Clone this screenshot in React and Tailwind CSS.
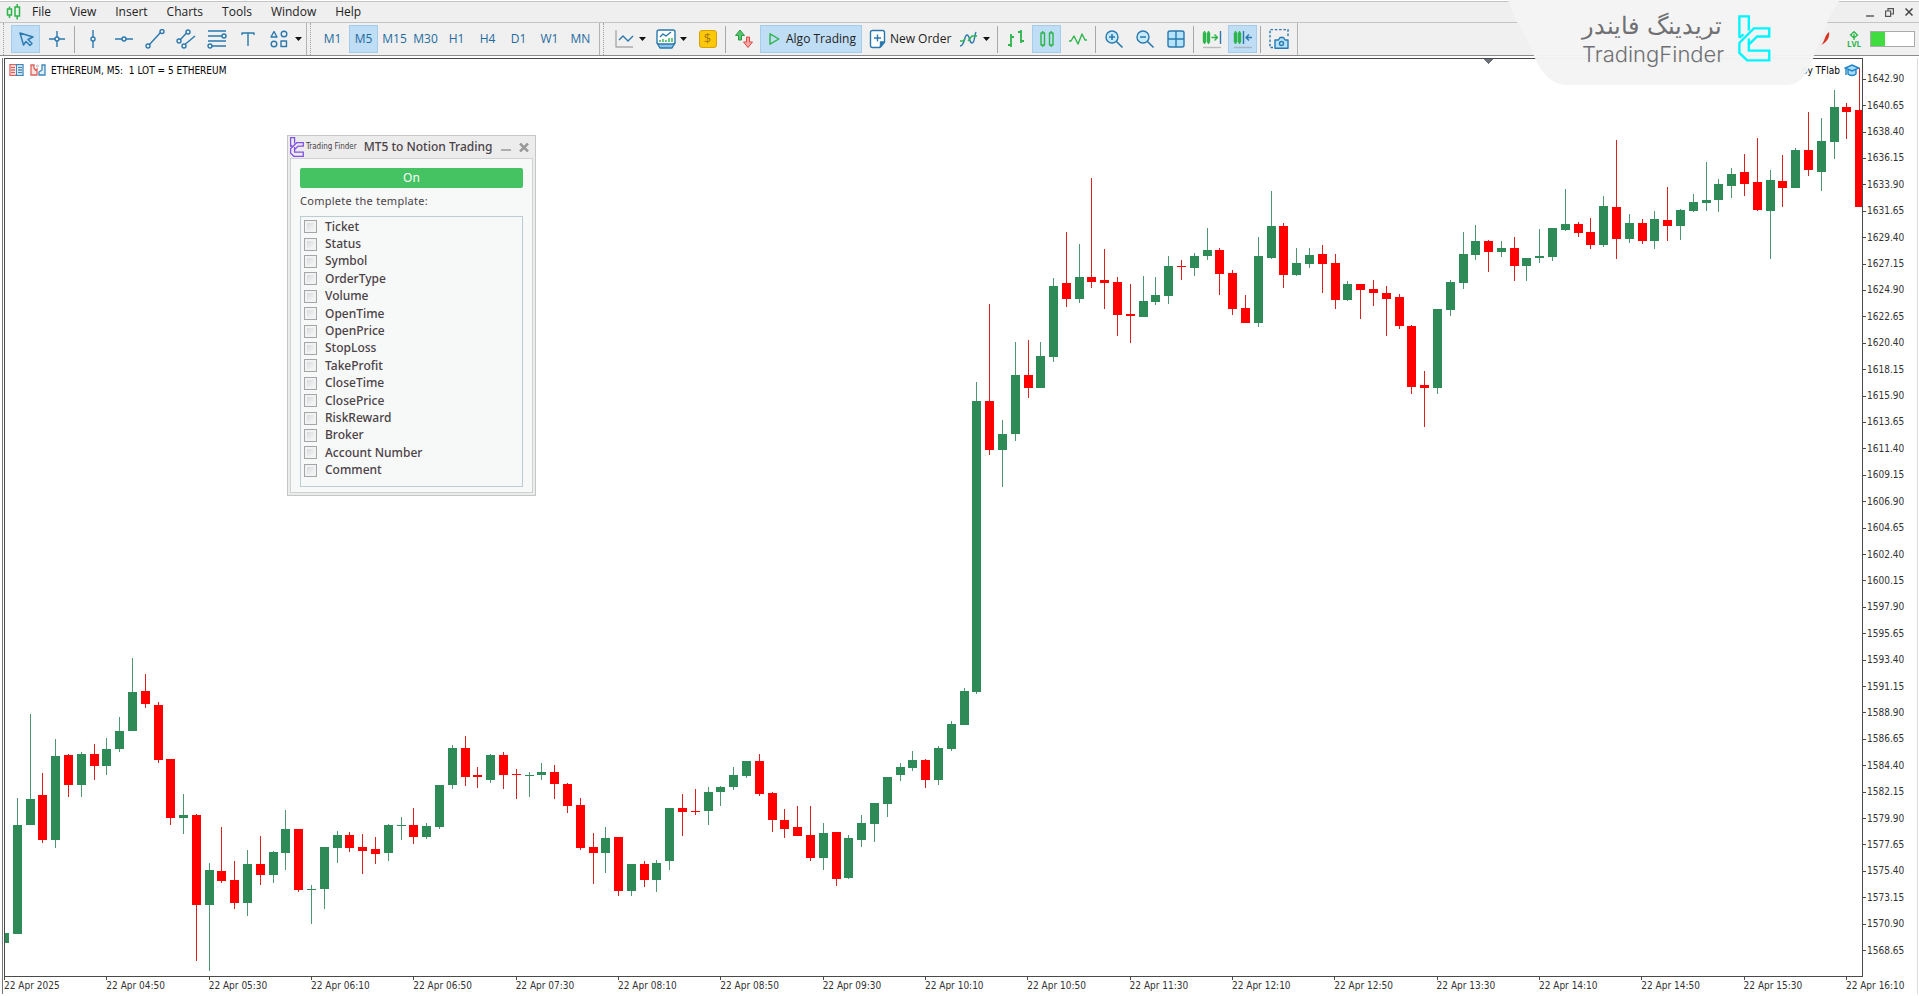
const BLUE = '#2a78ad';
const GREEN = '#2bb54a';

const menus = ['File', 'View', 'Insert', 'Charts', 'Tools', 'Window', 'Help'];

const timeframes = ['M1', 'M5', 'M15', 'M30', 'H1', 'H4', 'D1', 'W1', 'MN'];

const fields = [
  'Ticket',
  'Status',
  'Symbol',
  'OrderType',
  'Volume',
  'OpenTime',
  'OpenPrice',
  'StopLoss',
  'TakeProfit',
  'CloseTime',
  'ClosePrice',
  'RiskReward',
  'Broker',
  'Account Number',
  'Comment',
];

const prices = Array.from({ length: 34 }, (_, i) => (1642.9 - i * 2.25).toFixed(2));

const times = [
  '22 Apr 2025',
  '22 Apr 04:50',
  '22 Apr 05:30',
  '22 Apr 06:10',
  '22 Apr 06:50',
  '22 Apr 07:30',
  '22 Apr 08:10',
  '22 Apr 08:50',
  '22 Apr 09:30',
  '22 Apr 10:10',
  '22 Apr 10:50',
  '22 Apr 11:30',
  '22 Apr 12:10',
  '22 Apr 12:50',
  '22 Apr 13:30',
  '22 Apr 14:10',
  '22 Apr 14:50',
  '22 Apr 15:30',
  '22 Apr 16:10',
];

// [bullish, high, body top, body bottom, low] in plot units
const candles = [
  [1, 932, 932, 942, 942], [1, 797, 824, 933, 933], [1, 713, 798, 824, 824], [0, 772, 794, 839, 842],
  [1, 738, 755, 839, 847], [0, 753, 754, 784, 796], [1, 751, 753, 784, 796], [0, 743, 753, 765, 779],
  [1, 737, 748, 765, 774], [1, 716, 730, 748, 751], [1, 657, 691, 730, 730], [0, 673, 690, 703, 707],
  [0, 701, 704, 759, 762], [0, 758, 758, 817, 824], [1, 793, 814, 817, 833], [0, 813, 814, 904, 960],
  [1, 862, 869, 904, 970], [0, 826, 870, 880, 882], [0, 860, 879, 902, 908], [1, 849, 863, 902, 915],
  [0, 835, 863, 874, 884], [1, 850, 851, 874, 882], [1, 809, 828, 852, 869], [0, 828, 828, 889, 891],
  [1, 884, 888, 889, 923], [1, 846, 846, 888, 908], [1, 830, 834, 847, 862], [0, 831, 834, 847, 851],
  [0, 833, 846, 850, 873], [0, 836, 848, 853, 863], [1, 823, 824, 852, 860], [1, 816, 824, 825, 839],
  [0, 807, 824, 836, 843], [1, 822, 825, 836, 838], [1, 784, 784, 826, 828], [1, 744, 747, 784, 788],
  [0, 735, 747, 776, 785], [0, 766, 774, 776, 787], [1, 753, 754, 779, 782], [0, 751, 754, 774, 788],
  [0, 768, 773, 774, 798], [1, 771, 774, 775, 796], [1, 762, 771, 774, 779], [0, 764, 771, 783, 798],
  [0, 782, 783, 805, 812], [0, 797, 804, 847, 849], [0, 832, 846, 852, 883], [1, 826, 837, 852, 872],
  [0, 836, 836, 890, 895], [1, 863, 863, 890, 895], [0, 860, 863, 879, 886], [1, 859, 862, 879, 891],
  [1, 807, 807, 860, 869], [0, 793, 807, 811, 835], [0, 788, 810, 811, 814], [1, 786, 791, 810, 824],
  [1, 785, 786, 791, 805], [1, 766, 774, 786, 789], [1, 760, 760, 775, 777], [0, 753, 760, 793, 795],
  [0, 791, 792, 819, 831], [0, 808, 819, 828, 837], [0, 805, 826, 835, 835], [0, 805, 834, 857, 860],
  [1, 822, 832, 857, 869], [0, 831, 831, 878, 885], [1, 834, 837, 877, 878], [1, 814, 822, 839, 846],
  [1, 802, 802, 823, 841], [1, 776, 776, 803, 816], [1, 762, 766, 774, 780], [1, 750, 759, 767, 770],
  [0, 758, 759, 779, 787], [1, 745, 747, 779, 784], [1, 720, 723, 748, 750], [1, 687, 690, 724, 724],
  [1, 382, 401, 691, 693], [0, 304, 401, 450, 455], [1, 420, 434, 450, 487], [1, 342, 375, 434, 441],
  [0, 340, 375, 388, 398], [1, 342, 356, 388, 388], [1, 278, 286, 357, 362], [0, 232, 283, 299, 307],
  [1, 244, 277, 299, 303], [0, 178, 277, 282, 288], [0, 249, 280, 283, 309], [0, 277, 282, 315, 336],
  [0, 284, 314, 316, 343], [1, 276, 301, 317, 317], [1, 277, 295, 302, 305], [1, 256, 266, 296, 304],
  [0, 260, 266, 267, 280], [1, 253, 256, 268, 276], [1, 228, 250, 256, 260], [0, 248, 250, 274, 295],
  [0, 270, 273, 309, 315], [0, 295, 308, 323, 323], [1, 237, 256, 323, 327], [1, 191, 226, 258, 259],
  [0, 223, 226, 275, 288], [1, 248, 263, 275, 276], [1, 248, 255, 264, 268], [0, 245, 254, 264, 293],
  [0, 254, 263, 300, 309], [1, 281, 284, 300, 301], [0, 284, 284, 290, 319], [0, 280, 289, 293, 306],
  [0, 286, 293, 299, 336], [0, 294, 297, 326, 329], [0, 325, 326, 387, 394], [0, 371, 385, 388, 427],
  [1, 309, 309, 388, 394], [1, 280, 282, 310, 316], [1, 232, 254, 283, 289], [1, 225, 241, 255, 260],
  [0, 240, 241, 252, 272], [1, 241, 248, 252, 257], [0, 237, 248, 266, 281], [1, 258, 258, 266, 281],
  [1, 229, 256, 258, 263], [1, 228, 228, 257, 261], [1, 189, 224, 230, 231], [0, 222, 224, 233, 237],
  [0, 218, 232, 245, 249], [1, 196, 206, 245, 247], [0, 140, 207, 239, 259], [1, 214, 223, 239, 243],
  [0, 219, 223, 241, 244], [1, 211, 219, 241, 249], [0, 187, 220, 226, 241], [1, 209, 210, 226, 240],
  [1, 194, 202, 211, 212], [1, 162, 200, 203, 211], [1, 179, 184, 200, 212], [1, 168, 174, 186, 198],
  [0, 154, 172, 184, 196], [0, 138, 182, 210, 211], [1, 170, 180, 211, 259], [0, 155, 181, 188, 207],
  [1, 148, 150, 188, 188], [0, 112, 150, 170, 176], [1, 118, 141, 172, 191], [1, 90, 107, 142, 159],
  [0, 103, 107, 112, 139], [0, 68, 110, 207, 207],
];

const Icon = ({ children, color = BLUE, size = 20 }) => (
  <svg
    width={size}
    height={size}
    viewBox="0 0 20 20"
    fill="none"
    stroke={color}
    strokeWidth="1.4"
    strokeLinejoin="round"
    className="shrink-0"
    aria-hidden="true"
  >
    {children}
  </svg>
);

const Caret = () => (
  <svg width="7" height="4" viewBox="0 0 7 4" className="shrink-0" aria-hidden="true">
    <path d="M0 0h7L3.5 4z" fill="#111" />
  </svg>
);

const Tool = ({ label, active, children }) => (
  <button
    type="button"
    aria-label={label}
    className={`flex h-7 w-[29px] shrink-0 items-center justify-center border ${
      active ? 'border-[#a5cdea] bg-[#bfddf4]' : 'border-transparent'
    }`}
  >
    {children}
  </button>
);

const DropTool = ({ label, children }) => (
  <button type="button" aria-label={label} className="flex h-7 shrink-0 items-center gap-1 px-1">
    {children}
    <Caret />
  </button>
);

const Separator = () => <span className="mx-px h-[27px] w-px shrink-0 bg-[#a8a8a8]" />;

const Group = ({ children }) => (
  <div className="flex h-full shrink-0 items-center gap-0.5 border-r border-[#b4b4b4] pr-1">
    <span className="mr-[5px] ml-[3px] h-full border-l border-dotted border-[#a0a0a0]" />
    {children}
  </div>
);

const BrandMark = ({ className, color, strokeWidth = 6 }) => (
  <svg
    viewBox="537 46 98 140"
    className={className}
    fill="none"
    stroke={color}
    strokeWidth={strokeWidth}
    aria-hidden="true"
  >
    <path d="M541 114V50h28v42" />
    <path d="M541 114l12-10" />
    <path d="M584 86h46v24h-36l-25 24v18h61v29h-66l-23-22v-30z" />
    <path d="M569 116v18" />
  </svg>
);

const MenuBar = () => (
  <header className="flex h-[22px] items-center border-y border-[#c4c4c4] bg-[#efefef] pr-[6px] pl-[6px] text-[12px]">
    <svg width="15" height="16" viewBox="0 0 15 16" fill="none" stroke={GREEN} strokeWidth="1.5" aria-hidden="true">
      <path d="M1.500 5h4v6h-4zM3.500 2.500V5M3.500 11v3M9 3h4.500v9H9zM11.200 0v3M11.200 12v3.500" />
    </svg>
    <nav className="flex items-center gap-[19px] pl-[11px]">
      {menus.map((item) => (
        <a key={item} href="#" className="text-[#222]">
          {item}
        </a>
      ))}
    </nav>
    <div className="ml-auto flex items-center gap-[11px]">
      <button type="button" aria-label="Minimize">
        <svg width="8" height="9" viewBox="0 0 8 9" stroke="#555" strokeWidth="1.4">
          <path d="M0 8h8" />
        </svg>
      </button>
      <button type="button" aria-label="Restore">
        <svg width="9" height="9" viewBox="0 0 9 9" fill="none" stroke="#555" strokeWidth="1.2">
          <path d="M.6 3h5v5.400h-5zM3 3V.6h5.400V6H5.600" />
        </svg>
      </button>
      <button type="button" aria-label="Close">
        <svg width="8" height="8" viewBox="0 0 8 8" stroke="#444" strokeWidth="1.5">
          <path d="M.5.5l7 7M7.500.5l-7 7" />
        </svg>
      </button>
    </div>
  </header>
);

const Toolbar = () => (
  <div className="flex h-[33px] items-center border-b border-[#8c8c8c] bg-[#f0f0f0] text-[12px]">
    <Group>
      <Tool label="Cursor" active>
        <Icon>
          <path d="M4 4l13 4-5 2.500 4 4-2 2-4-4L7.500 16z" />
        </Icon>
      </Tool>
      <Tool label="Crosshair">
        <Icon>
          <path d="M10 2v6M10 12v6M2 10h6M12 10h6" />
          <circle cx="10" cy="10" r="2" />
        </Icon>
      </Tool>
      <Separator />
      <Tool label="Vertical line">
        <Icon>
          <path d="M10 1v7M10 12v7" />
          <circle cx="10" cy="10" r="2" />
        </Icon>
      </Tool>
      <Tool label="Horizontal line">
        <Icon>
          <path d="M1 10h7M12 10h7" />
          <circle cx="10" cy="10" r="2" />
        </Icon>
      </Tool>
      <Tool label="Trend line">
        <Icon>
          <path d="M4.500 15.500l11-12" />
          <circle cx="3" cy="17" r="2" />
          <circle cx="17" cy="2.500" r="2" />
        </Icon>
      </Tool>
      <Tool label="Channel">
        <Icon>
          <path d="M4.500 10.500l6-6.500M9.500 15L19 7" />
          <circle cx="3" cy="12" r="2" />
          <circle cx="12" cy="3" r="2" />
          <circle cx="8" cy="17" r="2" />
        </Icon>
      </Tool>
      <Tool label="Fibonacci">
        <Icon>
          <path d="M1 2h18M1 7h14M1 12h18M5 17h14" />
          <circle cx="17" cy="7" r="2" />
          <circle cx="3" cy="17" r="2" />
        </Icon>
      </Tool>
      <Tool label="Text">
        <Icon>
          <path d="M4 6V4h12v2M10 4v13" />
        </Icon>
      </Tool>
      <Tool label="Shapes">
        <Icon>
          <path d="M5 2.500L8 8H2zM12 12h5.500v5.500H12z" />
          <circle cx="15" cy="5" r="2.800" />
          <circle cx="5" cy="15" r="2.800" />
        </Icon>
      </Tool>
      <button type="button" aria-label="More shapes">
        <Caret />
      </button>
    </Group>

    <Group>
      {timeframes.map((tf) => (
        <button
          key={tf}
          type="button"
          className={`h-7 w-[29px] shrink-0 border text-center text-[#1f6b9f] ${
            tf === 'M5' ? 'border-[#a5cdea] bg-[#bfddf4]' : 'border-transparent'
          }`}
        >
          <span className="-mx-1">{tf}</span>
        </button>
      ))}
    </Group>

    <Group>
      <DropTool label="Chart type">
        <Icon>
          <path d="M1 1v17h17" stroke="#aaa" />
          <path d="M4 11l4-4 5 5 5-5" />
        </Icon>
      </DropTool>
      <DropTool label="Indicators">
        <Icon>
          <path d="M1 14l3 5h12l3-5z" fill="#8cc4e8" />
          <rect x="1" y="1" width="18" height="14" rx="2" fill="#fff" />
          <path d="M4 8l3-3 3 2 5-4" />
          <path d="M4 13v-2M7 13v-3M10 13v-2M13 13v-4M16 13v-4" stroke={GREEN} />
        </Icon>
      </DropTool>
      <Tool label="Symbols">
        <span className="flex h-[18px] w-[18px] items-center justify-center rounded-[3px] border border-[#d9a200] bg-[#fbc80b] text-[13px] text-[#a87900]">
          $
        </span>
      </Tool>
      <Separator />
      <Tool label="Depth of market">
        <Icon>
          <path d="M6 1L1.500 6.500h3V11h3V6.500h3z" stroke="#2b9a45" fill="#55c46c" strokeWidth="1" />
          <path d="M14 18.500L18.500 13h-3V8h-3v5h-3z" stroke="#d94a44" fill="#f3a6a2" strokeWidth="1" />
        </Icon>
      </Tool>
      <button
        type="button"
        className="flex h-7 shrink-0 items-center gap-1 border border-[#a5cdea] bg-[#bfddf4] px-[5px] text-[#222]"
      >
        <Icon color={GREEN} size={16}>
          <path d="M5 3.500v13L16 10z" strokeWidth="1.8" />
        </Icon>
        Algo Trading
      </button>
      <button type="button" className="flex h-7 shrink-0 items-center gap-0.5 pr-0.5 pl-1 text-[#222]">
        <Icon>
          <path d="M4.500 1.500h10a2 2 0 012 2V13l-5 5.500h-7a2 2 0 01-2-2v-13a2 2 0 012-2z" fill="#fff" />
          <path d="M16.500 13h-4v5z" fill={BLUE} />
          <path d="M9.500 5.500v7M6 9h7" />
        </Icon>
        New Order
      </button>
      <DropTool label="Objects">
        <Icon>
          <path d="M1 17C6 17 5 6 8 6s2 8 5 8 2-7 4-11" />
          <path d="M1 12h3l2-2M9 12l4-5h5" stroke={GREEN} />
        </Icon>
      </DropTool>
      <Separator />
      <Tool label="Bar chart">
        <Icon color={GREEN}>
          <path d="M5 5v13M5 8h3M2 16h3M15 1v13M12 3h3M15 12h3" strokeWidth="1.800" />
        </Icon>
      </Tool>
      <Tool label="Candlesticks" active>
        <Icon color={GREEN}>
          <path d="M4 4h3.500v12H4zM5.700 2v2M5.700 16v2M12.500 4H16v12h-3.500zM14.200 2v2M14.200 16v2" />
        </Icon>
      </Tool>
      <Tool label="Line chart">
        <Icon color={GREEN}>
          <path d="M1 12h2l3-5 4 8 4-10 3 6h2" />
        </Icon>
      </Tool>
      <Separator />
      <Tool label="Zoom in">
        <Icon>
          <circle cx="8" cy="8" r="6" fill="#c5ebfd" />
          <path d="M12.500 12.500l6 6M8 5v6M5 8h6" strokeWidth="1.600" />
        </Icon>
      </Tool>
      <Tool label="Zoom out">
        <Icon>
          <circle cx="8" cy="8" r="6" fill="#c5ebfd" />
          <path d="M12.500 12.500l6 6M5 8h6" strokeWidth="1.600" />
        </Icon>
      </Tool>
      <Tool label="Tile windows">
        <Icon>
          <rect x="2" y="2" width="16" height="16" rx="2" fill="#b5e3fb" />
          <path d="M10 2v16M2 10h16" />
        </Icon>
      </Tool>
      <Separator />
      <Tool label="Auto scroll">
        <Icon color={GREEN}>
          <path d="M1.500 4h2v9h-2zM5.500 4h2v9h-2zM2.500 2v13M6.500 2v13M9.500 8.500h6M12.500 5.500l3 3-3 3" />
          <path d="M18.500 2v13" stroke={BLUE} />
          <path d="M1 18.500h18" stroke="#bbb" />
        </Icon>
      </Tool>
      <Tool label="Chart shift" active>
        <Icon>
          <path d="M1.500 4h2v9h-2zM5.500 4h2v9h-2zM2.500 2v13M6.500 2v13" stroke={GREEN} />
          <path d="M10.500 2v13M19 8.500h-6M16 5.500l-3 3 3 3" />
          <path d="M1 18.500h18" stroke="#a9b6c0" />
        </Icon>
      </Tool>
      <Separator />
      <Tool label="Screenshot">
        <Icon>
          <path d="M4 18.500H1v-18h18V7" strokeDasharray="2.500 1.800" />
          <path d="M7 11h2.500l1.500-2.500h3.500L16 11h3v8.200H6V11z" fill="#b5e3fb" />
          <circle cx="12.500" cy="14.500" r="2" />
        </Icon>
      </Tool>
    </Group>

    <div className="ml-auto flex items-center gap-[10px] pr-1">
      <svg width="9" height="14" viewBox="0 0 9 14" className="mr-2" aria-hidden="true">
        <path d="M8 0c1 4-1 10-8 13C4 10 3 4 8 0z" fill="#d5361f" />
      </svg>
      <div className="flex w-3 flex-col items-center text-[#2bb54a]">
        <svg width="10" height="9" viewBox="0 0 10 9" fill="none" stroke="currentColor" strokeWidth="1.300" aria-hidden="true">
          <path d="M5 .7L8.500 4 5 7 1.500 4zM5 3v6" />
        </svg>
        <span className="text-[8px] leading-[8px] font-bold">LVL</span>
      </div>
      <div className="flex h-4 w-[45px] border border-[#aaa] bg-white">
        <div className="w-1/3 bg-[#40dc40]" />
      </div>
    </div>
  </div>
);

const CandleChart = () => (
  <svg
    viewBox="5 59 1857 916"
    preserveAspectRatio="none"
    shapeRendering="crispEdges"
    className="col-start-1 row-start-1 h-full min-h-0 w-full"
    role="img"
    aria-label="ETHEREUM M5 candlestick chart"
  >
    <path d="M1484 59h9l-4.500 5z" fill="#6b6f78" />
    {candles.map(([up, high, top, bottom, low], i) => {
      const x = Math.round(4 + i * 12.794);
      return (
        <g key={i}>
          <rect x={x} y={high} width="1" height={low - high} fill={up ? '#4f9670' : '#dc2020'} />
          <rect x={x - 4} y={top} width="9" height={bottom - top} fill={up ? '#2e8b57' : '#ff0000'} />
        </g>
      );
    })}
  </svg>
);

const TemplatePanel = () => (
  <section className="absolute top-[76px] left-[282px] w-[249px] border border-[#c4c6c8] bg-[#ececec] px-0.5 pb-0.5 text-[12px] text-[#4a4246]">
    <div className="flex h-[22px] items-center pr-1">
      <BrandMark className="h-5 w-[14px]" color="#8050e8" strokeWidth={9} />
      <span className="pl-0.5 text-[8px] whitespace-nowrap">Trading Finder</span>
      <h2 className="pl-[7px] font-['Noto_Sans'] text-[12px] font-medium whitespace-nowrap">MT5 to Notion Trading</h2>
      <button type="button" aria-label="Minimize panel" className="ml-auto">
        <svg width="10" height="8" viewBox="0 0 10 8" stroke="#999" strokeWidth="1.500">
          <path d="M0 7h10" />
        </svg>
      </button>
      <button type="button" aria-label="Close panel" className="ml-2">
        <svg width="10" height="9" viewBox="0 0 10 9" stroke="#999" strokeWidth="2.500">
          <path d="M1 .5l8 8M9 .5l-8 8" />
        </svg>
      </button>
    </div>
    <div className="flex flex-col border border-[#cfd1d3] bg-[#f7f8f8] px-[9px] pt-[9px] pb-[5px] font-['Noto_Sans']">
      <button type="button" className="h-5 rounded-[2px] bg-[#45c262] text-[12px] text-white">
        On
      </button>
      <p className="pt-[5px] pb-[7px] text-[11px] leading-4 tracking-wide">Complete the template:</p>
      <ul className="grid h-[271px] auto-rows-fr border border-[#bccdd2] pt-px pb-[7px] pl-[3px] font-medium">
        {fields.map((field) => (
          <li key={field} className="flex items-center">
            <label className="flex items-center gap-2 leading-4">
              <input
                type="checkbox"
                className="size-[13px] appearance-none border border-[#a3a7aa] bg-linear-to-br from-[#cfd2d4] to-white shadow-[inset_0_0_0_2px_#f1f2f2]"
              />
              {field}
            </label>
          </li>
        ))}
      </ul>
    </div>
  </section>
);

const ChartTitle = () => (
  <div className="z-10 col-start-1 row-start-1 flex h-[22px] items-center self-start pr-0.5 pl-1 text-[10px] text-black">
    <svg width="15" height="12" viewBox="0 0 15 12" fill="none" aria-hidden="true">
      <path d="M7.500.7H1v10.600h6.500M2 3.500h4M2 6h4M2 8.500h4" stroke="#e0605a" strokeWidth="1.300" />
      <path d="M7.500.7H14v10.600H7.500zM9 3.500h4M9 6h4M9 8.500h4" stroke="#3f86b8" strokeWidth="1.300" />
    </svg>
    <svg width="16" height="12" viewBox="0 0 16 12" fill="none" className="ml-1.5" aria-hidden="true">
      <path d="M4 1H1v10h6V5L5.500 6 4 4z" stroke="#e0605a" fill="#fbe3e1" strokeWidth="1.300" />
      <path d="M12 1h3v10H9V8l3-2z" stroke="#3f86b8" fill="#dceefa" strokeWidth="1.300" />
      <circle cx="7.500" cy="2" r="1.500" fill="#ccc" />
    </svg>
    <h1 className="pl-[5px] whitespace-pre">ETHEREUM, M5:  1 LOT = 5 ETHEREUM</h1>
    <span className="ml-auto">by TFlab</span>
    <svg width="16" height="13" viewBox="0 0 16 13" className="ml-1" aria-hidden="true">
      <path d="M8 1l7 3-7 3-7-3zM4 6v4c2 2 6 2 8 0V6M2 5v6" fill="#a8dbf8" stroke="#1d83c6" strokeWidth="1.400" />
    </svg>
  </div>
);

const BrandOverlay = () => (
  <div className="pointer-events-none absolute top-0 right-[79px] z-20 h-[85px] w-[332px]">
    <svg viewBox="0 0 332 85" className="absolute inset-0" aria-hidden="true">
      <path
        d="M0 0h332c-5 8-10 15-13 23-6 14-9 22-13 33-7 19-14 29-28 29H60C44 85 34 74 26 56 21 42 15 32 9 22 5 14 2 7 0 0z"
        fill="#f4f4f4"
        fillOpacity=".97"
      />
    </svg>
    <div className="relative flex h-full items-start pt-3 pl-[74px]">
      <div className="flex w-[140px] flex-col text-[#6f7073]">
        <span dir="rtl" lang="fa" className="font-['DejaVu_Sans'] text-[24px] leading-7 font-extralight whitespace-nowrap">
          تریدینگ فایندر
        </span>
        <span className="font-[Inter] text-[22px] leading-7 font-light">TradingFinder</span>
      </div>
      <BrandMark className="mt-[3px] ml-4 h-[47px] w-[33px]" color="#00f6ff" strokeWidth={7} />
    </div>
  </div>
);

export default function App() {
  return (
    <div className="relative flex h-screen min-h-[640px] flex-col overflow-hidden bg-white pt-px font-['Open_Sans',sans-serif]">
      <MenuBar />
      <Toolbar />
      <main className="mt-0.5 mr-px mb-0.5 ml-0.5 flex min-h-0 flex-1 flex-col border-r border-l border-r-[#ddd] border-l-[#777] pl-px font-['DejaVu_Sans_Condensed','DejaVu_Sans',sans-serif]">
        <div className="flex min-h-0 flex-1">
          <div className="relative grid min-w-0 flex-1 grid-cols-1 grid-rows-[minmax(0,1fr)] border border-[#4a4a4a]">
            <CandleChart />
            <ChartTitle />
            <TemplatePanel />
          </div>
          <ol className="flex w-[54px] shrink-0 flex-col pt-2 pb-[13px] text-[10px] text-[#333]">
            {prices.map((price) => (
              <li key={price} className="flex min-h-0 flex-1 items-center gap-px leading-3">
                <span className="h-px w-[3px] bg-[#4a4a4a]" />
                {price}
              </li>
            ))}
          </ol>
        </div>
        <ol className="flex h-[17px] shrink-0 text-[10px] whitespace-nowrap text-[#333]">
          {times.map((time) => (
            <li key={time} className="flex-1 last:w-[71px] last:flex-none">
              <span className="block h-[3px] w-px bg-[#4a4a4a]" />
              <span className="block leading-3">{time}</span>
            </li>
          ))}
        </ol>
      </main>
      <BrandOverlay />
    </div>
  );
}
